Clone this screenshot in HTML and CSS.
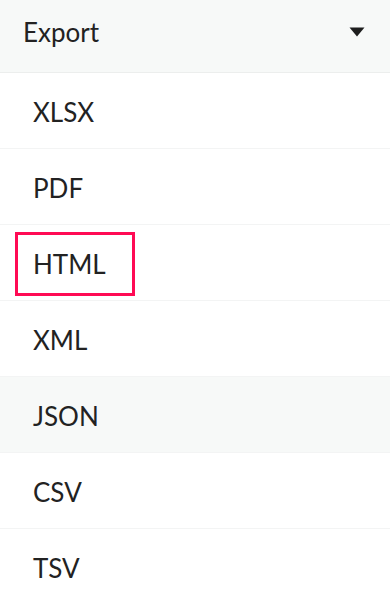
FILE: index.html
```html
<!DOCTYPE html>
<html>
<head>
<meta charset="utf-8">
<link rel="stylesheet" href="styles.css">
</head>
<body>
<div class="menu">
  <div class="menu-head">
    <span class="head-label">Export</span>
    <svg class="caret" width="16" height="10" viewBox="0 0 16 10"><path d="M0.5 0.5 H15.5 L8 9.5 Z" fill="#1e1e1e"/></svg>
  </div>
  <ul class="items">
    <li class="item"><span class="label">XLSX</span></li>
    <li class="item"><span class="label">PDF</span></li>
    <li class="item"><span class="label label-focus">HTML</span></li>
    <li class="item"><span class="label">XML</span></li>
    <li class="item item-hover"><span class="label">JSON</span></li>
    <li class="item"><span class="label">CSV</span></li>
    <li class="item"><span class="label">TSV</span></li>
  </ul>
</div>
</body>
</html>
```
FILE: styles.css
```css
html, body {
  margin: 0;
  padding: 0;
  background: #ffffff;
}
body {
  font-family: Lato, "Open Sans", sans-serif;
  color: #222222;
}
.menu {
  width: 390px;
}
.menu-head {
  background: #f7f9f8;
  border-bottom: 1px solid #eceeed;
  display: flex;
  align-items: center;
  justify-content: space-between;
  padding: 0 25px 0 23px;
  box-sizing: border-box;
  height: 73px;
}
.head-label {
  font-size: 26px;
  line-height: 30px;
  position: relative;
  top: -4px;
}
.caret {
  display: block;
  margin-top: -8px;
}
.items {
  list-style: none;
  margin: 0;
  padding: 0;
}
.item {
  height: 76px;
  box-sizing: border-box;
  border-bottom: 1px solid #f3f4f4;
  display: flex;
  align-items: center;
  padding-left: 33px;
}
.item-hover {
  background: #f7f9f8;
}
.label {
  font-size: 26px;
  line-height: 30px;
  position: relative;
  top: 1px;
}
.label-focus {
  margin-left: -18px;
  padding: 0 0 0 15px;
  width: 120px;
  height: 64px;
  box-sizing: border-box;
  border: 3px solid #ff0a54;
  display: flex;
  align-items: center;
  top: 1px;
}
```
